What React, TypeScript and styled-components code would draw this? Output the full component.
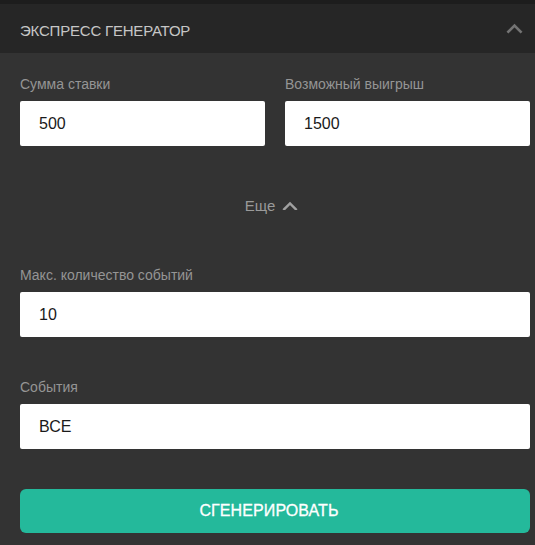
import React from "react";
import styled, { createGlobalStyle } from "styled-components";

const Global = createGlobalStyle`
  html, body { margin: 0; padding: 0; background: #333333; }
  body { font-family: "Liberation Sans", Arial, sans-serif; }
  * { box-sizing: border-box; }
`;

const Panel = styled.div`
  width: 535px;
  height: 545px;
  background: #333333;
  border-top: 4px solid #1d1d1d;
  overflow: hidden;
`;

const Header = styled.div`
  height: 49px;
  background: #262626;
  display: flex;
  align-items: center;
  justify-content: space-between;
  padding: 0 12px 0 20px;
`;

const Title = styled.div`
  color: #c6c6c6;
  font-size: 15px;
  letter-spacing: -0.2px;
  text-transform: uppercase;
  padding-top: 3px;
`;

const Body = styled.div`
  padding: 21px 5px 0 20px;
  display: flex;
  flex-direction: column;
`;

const Row = styled.div`
  display: grid;
  grid-template-columns: 1fr 1fr;
  column-gap: 20px;
`;

const Field = styled.div<{ $mt?: number }>`
  display: flex;
  flex-direction: column;
  margin-top: ${(p) => p.$mt ?? 0}px;
`;

const Label = styled.div`
  color: #959595;
  font-size: 14px;
  line-height: 20px;
  margin-bottom: 7px;
`;

const Input = styled.div`
  height: 45px;
  background: #ffffff;
  border-radius: 2px;
  display: flex;
  align-items: center;
  padding-left: 19px;
  color: #1a1a1a;
  font-size: 16px;
`;

const More = styled.div`
  height: 119px;
  display: flex;
  align-items: center;
  justify-content: center;
  gap: 7px;
  color: #9a9a9a;
  font-size: 15px;
  padding-right: 7px;
`;

const Button = styled.button`
  margin-top: 40px;
  height: 44px;
  width: 100%;
  border: none;
  border-radius: 6px;
  background: #24b99b;
  color: #ffffff;
  font-family: "Liberation Sans", Arial, sans-serif;
  font-size: 16px;
  text-transform: uppercase;
  letter-spacing: 0.1px;
  -webkit-text-stroke: 0.3px #ffffff;
  padding: 0 12px 0 0;
`;

const Chevron = ({ size, color }: { size: number; color: string }) => (
  <svg width={size} height={size * 0.6} viewBox="0 0 16 10" fill="none">
    <path d="M2 8.5 L8 2.5 L14 8.5" stroke={color} strokeWidth="2.6" strokeLinecap="square" />
  </svg>
);

export default function App() {
  return (
    <>
      <Global />
      <Panel>
        <Header>
          <Title>Экспресс генератор</Title>
          <Chevron size={17} color="#747474" />
        </Header>
        <Body>
          <Row>
            <Field>
              <Label>Сумма ставки</Label>
              <Input>500</Input>
            </Field>
            <Field>
              <Label>Возможный выигрыш</Label>
              <Input>1500</Input>
            </Field>
          </Row>
          <More>
            <span>Еще</span>
            <Chevron size={16} color="#a0a0a0" />
          </More>
          <Field>
            <Label>Макс. количество событий</Label>
            <Input>10</Input>
          </Field>
          <Field $mt={40}>
            <Label>События</Label>
            <Input>ВСЕ</Input>
          </Field>
          <Button>Сгенерировать</Button>
        </Body>
      </Panel>
    </>
  );
}
